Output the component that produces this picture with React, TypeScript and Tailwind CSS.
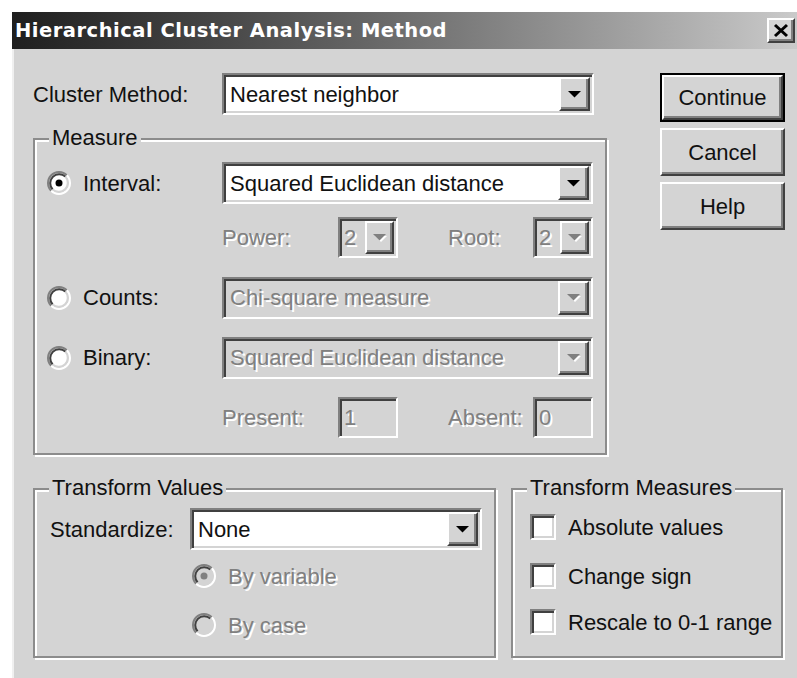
import type { ReactNode } from 'react'

// classic 3D edges, drawn at 2px
const sunken =
  'border-2 border-t-[#808080] border-l-[#808080] border-r-white border-b-white shadow-[inset_2px_2px_0_#404040,inset_-2px_-2px_0_#d4d4d4]'
const raised =
  'border-2 border-t-white border-l-white border-r-[#404040] border-b-[#404040] shadow-[inset_-2px_-2px_0_#808080]'
const dim = 'text-[#808080] [text-shadow:2px_2px_0_#fff]'

function Arrow({ disabled = false }: { disabled?: boolean }) {
  return (
    <svg width="16" height="9" viewBox="0 0 16 9">
      {disabled && <polygon points="3,3 15,3 9,9" fill="#fff" />}
      <polygon points="1,1 14,1 7.5,7.5" fill={disabled ? '#808080' : '#000'} />
    </svg>
  )
}

function DropButton({ disabled = false, className = '' }: { disabled?: boolean; className?: string }) {
  return (
    <div className={`flex shrink-0 items-center justify-center bg-[#d4d4d4] ${raised} ${className}`}>
      <Arrow disabled={disabled} />
    </div>
  )
}

function Combo({ value, disabled = false, className = '' }: { value: string; disabled?: boolean; className?: string }) {
  return (
    <div className={`flex h-[42px] p-[2px] ${sunken} ${disabled ? 'bg-[#d4d4d4]' : 'bg-white'} ${className}`}>
      <span className={`flex flex-1 items-center whitespace-nowrap pl-[4px] ${disabled ? dim : ''}`}>{value}</span>
      <DropButton disabled={disabled} className="w-[31px]" />
    </div>
  )
}

function Spin({ value }: { value: string }) {
  return (
    <div className={`flex h-[41px] w-[60px] bg-[#d4d4d4] p-[2px] ${sunken}`}>
      <span className={`flex flex-1 items-center pl-[2px] ${dim}`}>{value}</span>
      <DropButton disabled className="w-[29px]" />
    </div>
  )
}

function Field({ value }: { value: string }) {
  return (
    <div className={`flex h-[41px] w-[60px] items-center bg-[#d4d4d4] p-[2px] pl-[4px] ${sunken}`}>
      <span className={dim}>{value}</span>
    </div>
  )
}

function Radio({ checked = false, disabled = false }: { checked?: boolean; disabled?: boolean }) {
  return (
    <svg width="24" height="24" viewBox="0 0 24 24" className="shrink-0">
      <circle cx="12" cy="12" r="9" fill={disabled ? '#d4d4d4' : '#fff'} />
      <path d="M4.22 19.78 A11 11 0 0 1 19.78 4.22" fill="none" stroke="#808080" strokeWidth="2" />
      <path d="M19.78 4.22 A11 11 0 0 1 4.22 19.78" fill="none" stroke="#fff" strokeWidth="2" />
      <path d="M5.64 18.36 A9 9 0 0 1 18.36 5.64" fill="none" stroke="#404040" strokeWidth="2" />
      <path d="M18.36 5.64 A9 9 0 0 1 5.64 18.36" fill="none" stroke="#d4d4d4" strokeWidth="2" />
      {checked && <circle cx="12" cy="12" r="3.5" fill={disabled ? '#808080' : '#000'} />}
    </svg>
  )
}

function Check({ label }: { label: string }) {
  return (
    <div className="flex h-[42px] items-center gap-[12px]">
      <div className={`h-[26px] w-[26px] shrink-0 bg-white ${sunken}`} />
      <span className="whitespace-nowrap">{label}</span>
    </div>
  )
}

function Group({ title, className = '', children }: { title: string; className?: string; children: ReactNode }) {
  return (
    <div className={`relative border-2 border-[#8c8c8c] shadow-[inset_2px_2px_0_#fff,2px_2px_0_#fff] ${className}`}>
      <span className="absolute -top-[15px] left-[14px] bg-[#d4d4d4] px-[3px] leading-[26px]">{title}</span>
      {children}
    </div>
  )
}

function DialogButton({ label, isDefault = false }: { label: string; isDefault?: boolean }) {
  if (isDefault) {
    return (
      <button type="button" className="h-[49px] w-full border-2 border-black bg-[#d4d4d4]">
        <span className={`flex h-full w-full items-center justify-center ${raised}`}>{label}</span>
      </button>
    )
  }
  return (
    <button type="button" className={`flex h-[48px] w-full items-center justify-center bg-[#d4d4d4] ${raised}`}>
      {label}
    </button>
  )
}

function TitleBar() {
  return (
    <div className="flex h-[37px] shrink-0 items-center justify-between bg-linear-to-r from-[#1f1f1f] to-[#cacaca] pl-[3px] pr-[2px]">
      <span className="font-['DejaVu_Sans',Verdana,sans-serif] text-[19.5px] font-bold leading-none tracking-[0.5px] text-white">
        Hierarchical Cluster Analysis: Method
      </span>
      <div className={`flex h-[25px] w-[28px] items-center justify-center bg-[#d4d4d4] ${raised}`}>
        <svg width="16" height="15" viewBox="0 0 16 15">
          <path d="M2 2 L14 13 M14 2 L2 13" stroke="#000" strokeWidth="3" />
        </svg>
      </div>
    </div>
  )
}

export default function App() {
  return (
    <div className="h-[678px] w-[797px] overflow-hidden bg-white pl-[12px] pt-[12px] font-['Liberation_Sans',Arial,sans-serif] text-[22px] text-[#111]">
      <div className="flex h-full flex-col bg-[#d4d4d4] shadow-[inset_2px_0_0_#f0f0f0]">
        <TitleBar />
        <div className="pl-[21px] pt-[24px]">
          <div className="flex">
            <div className="w-[574px]">
              <div className="flex h-[42px] items-center">
                <span className="w-[189px]">Cluster Method:</span>
                <Combo value="Nearest neighbor" className="w-[372px]" />
              </div>

              <Group title="Measure" className="mt-[23px] h-[317px] pl-[12px] pt-[22px]">
                <div className="flex h-[42px] items-center">
                  <div className="flex w-[175px] items-center gap-[12px]">
                    <Radio checked />
                    <span>Interval:</span>
                  </div>
                  <Combo value="Squared Euclidean distance" className="w-[371px]" />
                </div>
                <div className="mt-[13px] flex h-[41px] items-center pl-[175px]">
                  <span className={`w-[116px] ${dim}`}>Power:</span>
                  <Spin value="2" />
                  <span className={`ml-[50px] w-[85px] ${dim}`}>Root:</span>
                  <Spin value="2" />
                </div>
                <div className="mt-[19px] flex h-[41px] items-center">
                  <div className="flex w-[175px] items-center gap-[12px]">
                    <Radio />
                    <span>Counts:</span>
                  </div>
                  <Combo value="Chi-square measure" disabled className="h-[41px] w-[371px]" />
                </div>
                <div className="mt-[19px] flex h-[41px] items-center">
                  <div className="flex w-[175px] items-center gap-[12px]">
                    <Radio />
                    <span>Binary:</span>
                  </div>
                  <Combo value="Squared Euclidean distance" disabled className="h-[41px] w-[371px]" />
                </div>
                <div className="mt-[19px] flex h-[41px] items-center pl-[175px]">
                  <span className={`w-[116px] ${dim}`}>Present:</span>
                  <Field value="1" />
                  <span className={`ml-[50px] w-[85px] ${dim}`}>Absent:</span>
                  <Field value="0" />
                </div>
              </Group>
            </div>

            <div className="ml-[53px] flex w-[125px] flex-col gap-[6px]">
              <DialogButton label="Continue" isDefault />
              <DialogButton label="Cancel" />
              <DialogButton label="Help" />
            </div>
          </div>

          <div className="mt-[33px] flex gap-[15px]">
            <Group title="Transform Values" className="h-[170px] w-[463px] pl-[15px] pt-[18px]">
              <div className="flex h-[42px] items-center">
                <span className="w-[140px]">Standardize:</span>
                <Combo value="None" className="w-[292px]" />
              </div>
              <div className="mt-[5px] flex h-[42px] items-center gap-[12px] pl-[142px]">
                <Radio checked disabled />
                <span className={dim}>By variable</span>
              </div>
              <div className="mt-[7px] flex h-[42px] items-center gap-[12px] pl-[142px]">
                <Radio disabled />
                <span className={dim}>By case</span>
              </div>
            </Group>

            <Group title="Transform Measures" className="h-[170px] w-[272px] pl-[17px] pt-[16px]">
              <Check label="Absolute values" />
              <div className="mt-[7px]">
                <Check label="Change sign" />
              </div>
              <div className="mt-[4px]">
                <Check label="Rescale to 0-1 range" />
              </div>
            </Group>
          </div>
        </div>
      </div>
    </div>
  )
}
